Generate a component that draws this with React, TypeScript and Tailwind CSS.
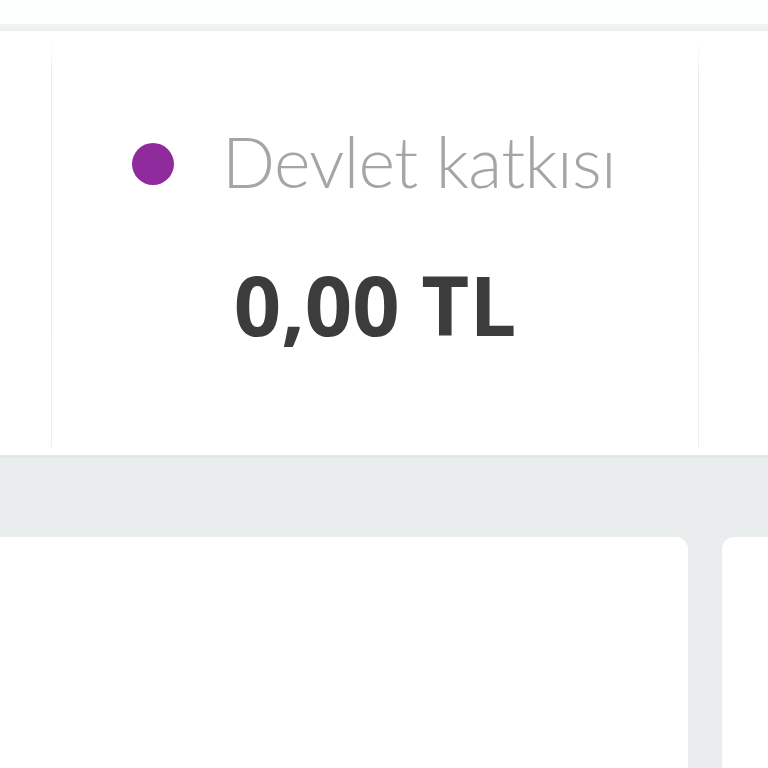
export default function App() {
  return (
    <div className="w-[768px] h-[768px] overflow-hidden flex flex-col bg-[#e9edee] font-['Lato',sans-serif]">
      {/* top strip */}
      <div className="h-[24px] bg-[#fdfefe]" />
      <div className="h-[7px] bg-gradient-to-b from-[#f3f5f5] to-[#eceeef]" />

      {/* stat row */}
      <div className="h-[424px] bg-white flex">
        <div className="w-[51px]" />
        <div className="w-px my-[8px] bg-gradient-to-b from-white from-0% via-[#e6e8e9] via-10% to-[#eceeef]" />
        <div className="w-[646px] flex flex-col items-center pt-[95px]">
          <div className="flex items-start gap-[48px] pr-[2px]">
            <span className="mt-[17px] w-[42px] h-[42px] rounded-full bg-[#8f2b9d]" />
            <span className="text-[70px] leading-none font-light text-[#a5a5a5] tracking-[-0.7px]">
              Devlet katkısı
            </span>
          </div>
          <div className="mt-[66px] text-[83px] leading-none font-bold text-[#3c3c3c] font-['Open_Sans',sans-serif]">
            0,00 TL
          </div>
        </div>
        <div className="w-px my-[8px] bg-gradient-to-b from-white from-0% via-[#e6e8e9] via-10% to-[#eceeef]" />
        <div className="flex-1" />
      </div>

      {/* gap band */}
      <div className="h-[82px] border-t-[3px] border-[#e4e7e8]" />

      {/* bottom cards */}
      <div className="flex-1 flex gap-[34px]">
        <div className="w-[688px] bg-white rounded-tr-[12px]" />
        <div className="flex-1 bg-white rounded-tl-[12px]" />
      </div>
    </div>
  )
}
